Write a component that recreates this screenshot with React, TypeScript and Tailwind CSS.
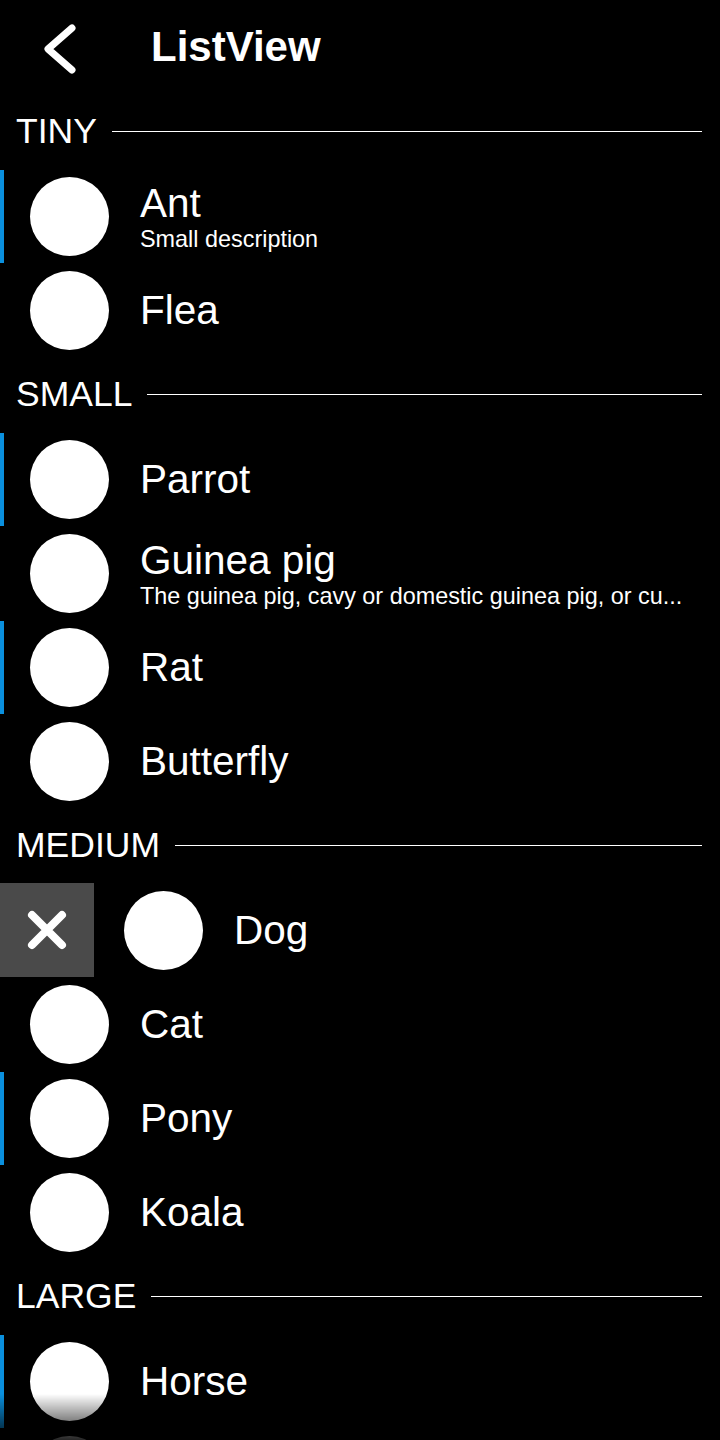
import React from "react";

type Item = { name: string; desc?: string; bar?: boolean; swiped?: boolean };
type Section = { title: string; items: Item[] };

const sections: Section[] = [
  {
    title: "TINY",
    items: [
      { name: "Ant", desc: "Small description", bar: true },
      { name: "Flea" },
    ],
  },
  {
    title: "SMALL",
    items: [
      { name: "Parrot", bar: true },
      { name: "Guinea pig", desc: "The guinea pig, cavy or domestic guinea pig, or cu..." },
      { name: "Rat", bar: true },
      { name: "Butterfly" },
    ],
  },
  {
    title: "MEDIUM",
    items: [
      { name: "Dog", swiped: true },
      { name: "Cat" },
      { name: "Pony", bar: true },
      { name: "Koala" },
    ],
  },
  {
    title: "LARGE",
    items: [{ name: "Horse", bar: true }, { name: "" }],
  },
];

function Row({ item }: { item: Item }) {
  return (
    <div className="flex h-[94px] items-center">
      {item.swiped ? (
        <div className="flex h-[94px] w-[94px] shrink-0 items-center justify-center bg-[#4a4a4a]">
          <svg width="40" height="40" viewBox="0 0 40 40">
            <path
              d="M5 5 L35 35 M35 5 L5 35"
              stroke="white"
              strokeWidth="8"
              strokeLinecap="round"
              fill="none"
            />
          </svg>
        </div>
      ) : (
        <div className={`h-[93px] w-[4px] shrink-0 ${item.bar ? "bg-[#0a90de]" : "bg-transparent"}`} />
      )}
      <div className={`h-[79px] w-[79px] shrink-0 rounded-full bg-white ${item.swiped ? "ml-[30px]" : "ml-[26px]"}`} />
      {item.name && (
        <div className="ml-[31px] flex min-w-0 flex-col">
          <div className="text-[40.5px] leading-[44px] text-white">{item.name}</div>
          {item.desc && (
            <div className="mt-[1px] whitespace-nowrap text-[23.4px] leading-[26px] text-white">{item.desc}</div>
          )}
        </div>
      )}
    </div>
  );
}

export default function App() {
  return (
    <div
      className="relative min-h-[1440px] w-[720px] bg-black text-white"
      style={{ fontFamily: '"Liberation Sans", Arial, sans-serif' }}
    >
      <div className="flex h-[94px] items-center">
        <svg width="94" height="94" viewBox="0 0 94 94" className="shrink-0">
          <path
            d="M72 28 L48 49 L72 70"
            stroke="white"
            strokeWidth="7"
            strokeLinecap="round"
            strokeLinejoin="round"
            fill="none"
          />
        </svg>
        <div className="ml-[57px] text-[42px] font-bold leading-none">ListView</div>
      </div>
      {sections.map((s) => (
        <div key={s.title}>
          <div className="flex h-[75px] items-center pl-[16px] pr-[18px]">
            <div className="text-[35.5px] leading-none">{s.title}</div>
            <div className="ml-[15px] h-px flex-1 bg-white" />
          </div>
          {s.items.map((it, i) => (
            <Row key={s.title + i} item={it} />
          ))}
        </div>
      ))}
      <div className="pointer-events-none fixed bottom-0 left-0 h-[46px] w-[720px] bg-gradient-to-b from-transparent to-black/85" />
    </div>
  );
}
